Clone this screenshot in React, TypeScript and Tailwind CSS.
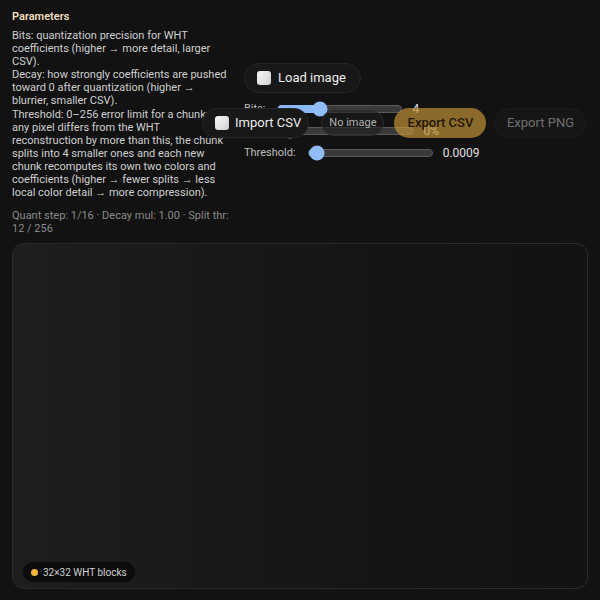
import React from 'react';

type SliderRowProps = {
    label: string;
    value: string;
    pct: number;
};

function SliderRow({ label, value, pct }: SliderRowProps) {
    return (
        <div className="flex items-center h-[22px] text-[11px] text-[#bdbdbd]">
            <span className="mr-3">{label}</span>
            <div className="relative w-[125px] h-[8px] rounded-full bg-[#3a3a3a] border border-[#5a5a5a]">
                <div
                    className="absolute left-0 top-[-1px] h-[8px] rounded-full bg-[#8ab8f5]"
                    style={{ width: `${pct}%` }}
                />
                <div
                    className="absolute top-1/2 w-[15px] h-[15px] -translate-x-1/2 -translate-y-1/2 rounded-full bg-[#90bdf8]"
                    style={{ left: `${pct}%` }}
                />
            </div>
            <span className="ml-[10px] text-[12px] text-[#e0e0e0]">{value}</span>
        </div>
    );
}

function CheckIcon() {
    return <span className="w-[14px] h-[14px] rounded-[3px] bg-gradient-to-br from-white to-[#cfcfcf] shadow-inner" />;
}

export default function App() {
    return (
        <div className="relative w-[600px] h-[600px] bg-[#121212] overflow-hidden" style={{ fontFamily: 'Roboto, "Noto Sans", sans-serif' }}>
            <div className="flex">
                {/* Parameters */}
                <div className="w-[236px] pl-3 pr-[6px] pt-[10px]">
                    <h3 className="text-[11px] font-semibold text-[#f1dfbc] leading-[14px] mb-[5px]">Parameters</h3>
                    <p className="text-[11px] leading-[13.1px] text-[#cfcfcf]">
                        Bits: quantization precision for WHT coefficients (higher → more detail, larger CSV).
                        <br />
                        Decay: how strongly coefficients are pushed toward 0 after quantization (higher → blurrier, smaller CSV).
                        <br />
                        Threshold: 0–256 error limit for a chunk: if any pixel differs from the WHT reconstruction by more than this, the chunk splits into 4 smaller ones and each new chunk recomputes its own two colors and coefficients (higher → fewer splits → less local color detail → more compression).
                    </p>
                    <p className="mt-[10px] text-[11px] leading-[13.1px] text-[#8a8a8a]">
                        Quant step: 1/16 · Decay mul: 1.00 · Split thr: 12 / 256
                    </p>
                </div>

                {/* Controls */}
                <div className="pl-2 pt-[63px] flex flex-col">
                    <button className="self-start flex items-center gap-[7px] h-[30px] pl-3 pr-[14px] rounded-full bg-[#181818] border border-[#262626] text-[13px] text-[#ececec]">
                        <CheckIcon />
                        Load image
                    </button>
                    <div className="mt-[5px] flex flex-col">
                        <SliderRow label="Bits:" value="4" pct={34} />
                        <SliderRow label="Decay:" value="0%" pct={0} />
                        <SliderRow label="Threshold:" value="0.0009" pct={7} />
                    </div>
                </div>
            </div>

            {/* toolbar overlay */}
            <div className="absolute left-[202px] top-[108px] flex items-center">
                <button className="flex items-center gap-[6px] h-[30px] pl-[12px] pr-[7px] rounded-full bg-[#181818] border border-[#262626] text-[13px] text-[#ececec]">
                    <CheckIcon />
                    Import CSV
                </button>
                <span className="ml-[12px] h-[26px] flex items-center px-[7px] rounded-full bg-[#1a1a1a]/60 border border-[#2e2e2e] text-[11px] text-[#b0b0b0]">No image</span>
                <button className="ml-[10px] h-[30px] w-[92px] rounded-full bg-[#c09036]/70 text-[13px] font-medium text-[#22180a]">Export CSV</button>
                <button className="ml-[8px] h-[30px] w-[92px] rounded-full bg-[#161616] border border-[#1c1c1c] text-[13px] text-[#6f6f6f]">Export PNG</button>
            </div>

            {/* Canvas */}
            <div className="relative mx-3 mt-[8px] h-[346px] rounded-xl border border-[#2c2c2c] bg-gradient-to-r from-[#1e1e1e] via-[#161616] to-[#121212]">
                <div className="absolute left-[10px] bottom-[6px] flex items-center gap-[5px] h-[20px] pl-[8px] pr-[8px] rounded-full bg-[#0c0c0c] text-[10px] text-[#d2d2d2]">
                    <span className="w-[7px] h-[7px] rounded-full bg-[#f3b63a]" />
                    32×32 WHT blocks
                </div>
            </div>
        </div>
    );
}
